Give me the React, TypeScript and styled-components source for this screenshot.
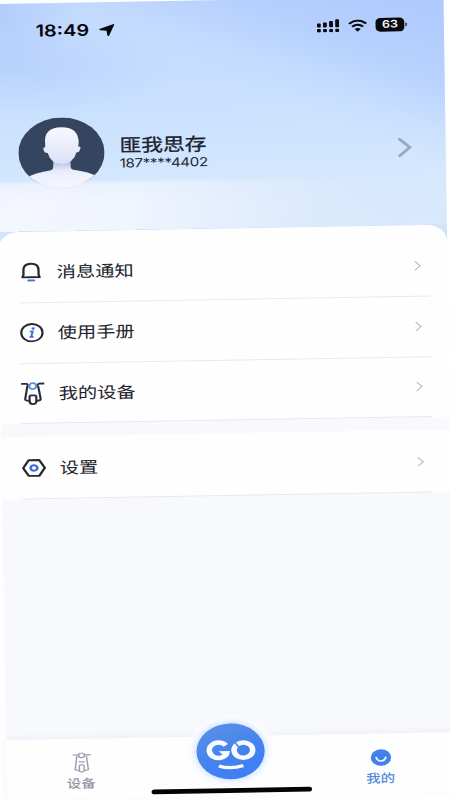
import React from "react";
import styled, { createGlobalStyle } from "styled-components";

const GlobalStyle = createGlobalStyle`
  * { box-sizing: border-box; }
  html, body { margin: 0; background: #fefefe; }
  body { width: 450px; height: 800px; overflow: hidden; }
`;

const Viewport = styled.div`
  width: 450px;
  height: 800px;
  overflow: hidden;
  background: #fefefe;
`;

/* The phone screen is 375 wide and shown slightly stretched and tilted. */
const Screen = styled.main`
  width: 375px;
  height: 812px;
  display: flex;
  flex-direction: column;
  position: relative;
  transform-origin: 0 0;
  transform: matrix(1.197, -0.0206, 0.0152, 0.98, -5.5, 4);
  background: #f8f9fd;
  font-family: Inter, "Noto Sans CJK SC", sans-serif;
  color: #22242c;
`;

const Header = styled.header`
  height: 250px;
  flex: none;
  display: flex;
  flex-direction: column;
  background:
    linear-gradient(206deg, rgba(160, 187, 253, 0.6) 0%, rgba(165, 193, 253, 0.45) 20%, rgba(180, 206, 254, 0.15) 32%, transparent 40%),
    radial-gradient(ellipse 130px 50px at 6% 27%, rgba(165, 192, 252, 0.38), transparent),
    radial-gradient(ellipse 70px 70px at 0 3%, rgba(160, 188, 251, 0.5), transparent),
    linear-gradient(178deg, #c3dafe 0%, #c7dffe 30%, #cde3fe 55%, #d6e8fd 75%, #dbe9fc 100%);
`;

const StatusBar = styled.div`
  height: 56px;
  padding: 0 31px 0 34px;
  display: flex;
  align-items: center;
  color: #050608;
`;

const Clock = styled.span`
  font-size: 16.6px;
  font-weight: 600;
  margin-right: 8px;
`;

const StatusIcons = styled.div`
  margin-left: auto;
  display: flex;
  align-items: center;
  gap: 7px;
`;

const Battery = styled.span`
  width: 24px;
  height: 13.5px;
  border-radius: 4px;
  background: #07090d;
  color: #f2f6ff;
  font-size: 10.5px;
  line-height: 13.5px;
  font-weight: 600;
  text-align: center;
`;

const BatteryGroup = styled.span`
  display: flex;
  align-items: center;
  gap: 0.5px;
  &::after {
    content: "";
    width: 1.5px;
    height: 4px;
    border-radius: 0 2px 2px 0;
    background: #07090d;
  }
`;

const Profile = styled.section`
  height: 72px;
  margin-top: 61px;
  padding: 0 28px 0 17.5px;
  display: flex;
  align-items: center;
`;

const Identity = styled.div`
  margin: 3px auto 0 13px;
  display: flex;
  flex-direction: column;
`;

const Name = styled.strong`
  font-size: 18.2px;
  line-height: 20.5px;
  font-weight: 400;
  color: #1d222e;
  -webkit-text-stroke: 0.3px #1d222e;
`;

const Phone = styled.span`
  font-size: 12.7px;
  line-height: 16px;
  letter-spacing: -0.33px;
  color: #242936;
`;

const Mist = styled.div`
  height: 69px;
  margin-top: -8px;
  background:
    linear-gradient(to bottom, transparent 51.5px, #d4e2fa 51.5px),
    linear-gradient(101deg, #f4f6fe 0%, rgba(243, 246, 254, 0.92) 28%, rgba(238, 243, 254, 0.6) 50%, rgba(230, 240, 254, 0.25) 70%, rgba(230, 240, 254, 0) 90%);
  mask-image: linear-gradient(to bottom, transparent, rgba(0, 0, 0, 0.75) 4px, #000 24px);
`;

const Group = styled.section<{ $first?: boolean }>`
  flex: none;
  position: relative;
  background: #fefefe;
  margin-top: ${(p) => (p.$first ? "-17px" : "12.5px")};
  padding-top: ${(p) => (p.$first ? "11px" : "2px")};
  border-radius: ${(p) => (p.$first ? "17px 17px 0 0" : "0")};
`;

const Row = styled.div`
  height: 61.8px;
  margin: 0 15px 0 17px;
  padding: 0 7.5px 0 0;
  display: flex;
  align-items: center;
  border-bottom: 1px solid #e9e9ec;
`;

const RowIcon = styled.span`
  width: 20px;
  height: 22px;
  margin-right: 11.5px;
  display: flex;
  align-items: center;
  justify-content: center;
`;

const RowLabel = styled.span`
  flex: 1;
  font-size: 16.1px;
  line-height: 22px;
  color: #22232b;
`;

const TabBar = styled.nav`
  height: 61.5px;
  margin-top: auto;
  display: grid;
  grid-template-columns: repeat(3, 1fr);
  background: #fefefe;
  box-shadow: 0 -2px 6px rgba(170, 175, 215, 0.12);
`;

const Tab = styled.div<{ $active?: boolean }>`
  display: flex;
  flex-direction: column;
  align-items: center;
  padding-top: 14px;
  font-size: 12px;
  line-height: 16px;
  font-weight: 400;
  color: ${(p) => (p.$active ? "#447fd9" : "#8d8e9f")};
  -webkit-text-stroke: 0.15px currentColor;
  svg { height: 21px; margin-bottom: 3.5px; }
`;

const GoTab = styled.div`
  width: 73px;
  height: 73px;
  margin: -21px auto 0;
  padding: 8px;
  border-radius: 50%;
  background: rgba(250, 252, 255, 0.8);
`;

const GoButton = styled.div`
  width: 57px;
  height: 57px;
  border-radius: 50%;
  background: linear-gradient(155deg, #5c93e5, #4783ee 50%, #3c7cf8);
  box-shadow: 0 0 7px rgba(100, 160, 255, 0.45);
`;

const HomeIndicator = styled.div`
  position: absolute;
  left: 121px;
  bottom: 3px;
  width: 134px;
  height: 4.8px;
  border-radius: 3px;
  background: #030303;
`;

const Chevron = ({ large }: { large?: boolean }) =>
  large ? (
    <svg width="12" height="21" viewBox="0 0 12 21" fill="none" stroke="#98a6bf" strokeWidth="2.6" strokeLinecap="round">
      <path d="M1.5 2 10 10.5 1.5 19" />
    </svg>
  ) : (
    <svg width="6" height="11" viewBox="0 0 6 11" fill="none" stroke="#b5b6bb" strokeWidth="1">
      <path d="M.6 1 5.1 5.5.6 10" />
    </svg>
  );

const LocationArrow = () => (
  <svg width="13" height="13" viewBox="0 0 13 13">
    <path d="M12.3.5Q13 .4 12.7 1.2L8.4 12.2Q7.5 13.3 6.9 12.1L6.2 7.2.9 6.700Q-.4 5.900.8 5.200Z" fill="#07090d" />
  </svg>
);

const Signal = () => (
  <svg width="19" height="14" viewBox="0 0 19 14" fill="#07090d">
    <rect x="0" y="4.6" width="3.2" height="4.1" rx=".8" />
    <rect x="5.1" y="3.7" width="3.2" height="5" rx=".8" />
    <rect x="10.2" y="2.2" width="3.2" height="6.5" rx=".8" />
    <rect x="15.3" y=".5" width="3.2" height="8.2" rx=".8" />
    {[0, 5.1, 10.2, 15.3].map((x) => (
      <rect key={x} x={x} y="10.3" width="3.2" height="3.4" rx="1" />
    ))}
  </svg>
);

const Wifi = () => (
  <svg width="16" height="13" viewBox="0 0 16 13" fill="none" stroke="#07090d" strokeWidth="2">
    <path d="M.8 4.5Q8-2 15.2 4.5M3.4 7.5Q8 3.4 12.6 7.5" />
    <path d="M5.4 9.8Q8 7.8 10.6 9.8L8 12.6Z" fill="#07090d" stroke="none" />
  </svg>
);

const Avatar = () => (
  <svg width="72" height="72" viewBox="0 0 72 72">
    <defs>
      <clipPath id="round"><circle cx="36" cy="36" r="36" /></clipPath>
      <linearGradient id="face" x1="0" y1="0" x2="0" y2="1">
        <stop offset="0" stopColor="#f8f8fe" />
        <stop offset="1" stopColor="#dbe1f6" />
      </linearGradient>
      <linearGradient id="neck" x1="0" y1="0" x2="0" y2="1">
        <stop offset=".12" stopColor="#b9c3e6" />
        <stop offset=".4" stopColor="#e6eafa" />
        <stop offset=".6" stopColor="#eff2fd" />
      </linearGradient>
    </defs>
    <g clipPath="url(#round)">
      <rect width="72" height="72" fill="#35445f" />
      <path d="M4 62Q14 55.5 27 53.5 29 53 29 50V42H43.5V50Q43.5 53 46 53.5 58 55.5 68 62V72H4Z" fill="url(#neck)" />
      <path d="M22.5 27Q21 10 36 10 51 10 50.5 27L50 30Q53 29.5 51.5 33 51 36 48.5 36 46 47 36 47.5 27 47 24.5 36 21.5 36 21 32 20.5 29.5 22.5 30Z" fill="url(#face)" />
    </g>
  </svg>
);

const Bell = () => (
  <svg width="18" height="20" viewBox="0 0 18 20" fill="none" strokeLinecap="round" strokeLinejoin="round">
    <path d="M1.8 15.3 2.7 12.8V8Q2.7 1.6 9 1.6T15.3 8V12.8L16.2 15.3Z" stroke="#27282e" strokeWidth="1.9" />
    <path d="M6.8 18.7H11.4" stroke="#4470dc" strokeWidth="2" />
  </svg>
);

const Manual = () => (
  <svg width="20" height="20" viewBox="0 0 20 20" fill="none">
    <circle cx="10" cy="10" r="8.9" stroke="#27282e" strokeWidth="1.8" />
    <path d="M8.2 8.7H10.6L9.4 14.2M7.9 14.3H11.3" stroke="#406fdd" strokeWidth="1.7" />
    <circle cx="11" cy="5.7" r="1.3" fill="#406fdd" />
  </svg>
);

const Scooter = () => (
  <svg width="20" height="24" viewBox="0 0 20 24" fill="none" stroke="#292c3b" strokeWidth="1.8" strokeLinecap="round" strokeLinejoin="round">
    <path d="M1 2H5L6.5 4.5M19 2H15L13.500 4.500M5.400 5 3.500 17.800Q3.500 19.500 7 19.500M14.600 5 16.500 17.800Q16.500 19.500 13 19.500" />
    <path d="M7.200 15.500Q7.200 14 8.700 14H11.300Q12.800 14 12.800 15.500V20Q12.800 22.800 10 22.800T7.200 20Z" />
    <circle cx="10" cy="4.5" r="3" stroke="#5590dc" />
  </svg>
);

const Settings = () => (
  <svg width="20" height="20" viewBox="0 0 20 20" fill="none">
    <path d="M5.6 2H14.4L19 10 14.4 18H5.6L1 10Z" stroke="#27282e" strokeWidth="2" strokeLinejoin="round" />
    <circle cx="10" cy="10" r="2.8" stroke="#406fdd" strokeWidth="2.1" />
  </svg>
);

const ScooterTab = () => (
  <svg width="16" height="21" viewBox="0 0 16 21" fill="none" stroke="#9c9dad" strokeWidth="1.2">
    <path d="M.5 2.5H5.500M10.500 2.500H15.500M4 3.500 2.500 17.700 6 18.700M12 3.500 13.500 17.700 10 18.700M5.500 9.700H10.500" />
    <circle cx="8" cy="3" r="2.4" />
    <rect x="6" y="12.8" width="4" height="7" rx="1.2" />
  </svg>
);

const SmileTab = () => (
  <svg width="18" height="21" viewBox="0 0 18 21">
    <circle cx="9" cy="10.5" r="8.5" fill="#4281ed" />
    <path d="M5 10.3Q5.8 14 9 14T13 10.3" fill="none" stroke="#f2f8ff" strokeWidth="1.6" strokeLinecap="round" />
  </svg>
);

const GoFace = () => (
  <svg width="57" height="57" viewBox="0 0 57 57" fill="none" stroke="#f8fbff">
    <path d="M24.500 22.300A7.700 7.900 0 1 0 25.500 30.300" strokeWidth="4.6" />
    <path d="M18.5 28.3 28 28.3 27.3 31.3 21.5 31.3Z" fill="#f8fbff" stroke="none" />
    <circle cx="39.2" cy="27.5" r="7.8" strokeWidth="4.6" />
    <path d="M31.8 19 36 25" stroke="#4b87eb" strokeWidth="1.5" />
    <path d="M18.5 43.2Q28.5 47.2 39 43.2" strokeWidth="3.3" />
  </svg>
);

const groups = [
  [
    { label: "消息通知", Icon: Bell },
    { label: "使用手册", Icon: Manual },
    { label: "我的设备", Icon: Scooter },
  ],
  [{ label: "设置", Icon: Settings }],
];

export default function App() {
  return (
    <Viewport>
      <GlobalStyle />
      <Screen>
        <Header>
          <StatusBar>
            <Clock>18:49</Clock>
            <LocationArrow />
            <StatusIcons>
              <Signal />
              <Wifi />
              <BatteryGroup><Battery>63</Battery></BatteryGroup>
            </StatusIcons>
          </StatusBar>
          <Profile>
            <Avatar />
            <Identity>
              <Name>匪我思存</Name>
              <Phone>187****4402</Phone>
            </Identity>
            <Chevron large />
          </Profile>
          <Mist />
        </Header>
        {groups.map((rows, i) => (
          <Group key={i} $first={i === 0}>
            {rows.map(({ label, Icon }) => (
              <Row key={label}>
                <RowIcon><Icon /></RowIcon>
                <RowLabel>{label}</RowLabel>
                <Chevron />
              </Row>
            ))}
          </Group>
        ))}
        <TabBar>
          <Tab><ScooterTab />设备</Tab>
          <GoTab><GoButton><GoFace /></GoButton></GoTab>
          <Tab $active><SmileTab />我的</Tab>
        </TabBar>
        <HomeIndicator />
      </Screen>
    </Viewport>
  );
}
